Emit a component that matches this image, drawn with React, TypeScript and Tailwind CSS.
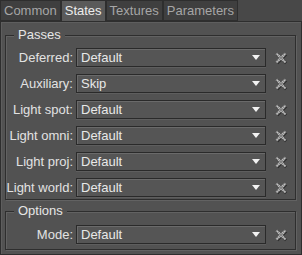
import React from 'react';

const rows: { label: string; value: string }[] = [
  { label: 'Deferred:', value: 'Default' },
  { label: 'Auxiliary:', value: 'Skip' },
  { label: 'Light spot:', value: 'Default' },
  { label: 'Light omni:', value: 'Default' },
  { label: 'Light proj:', value: 'Default' },
  { label: 'Light world:', value: 'Default' },
];

function ClearIcon() {
  return (
    <svg width="14" height="14" viewBox="0 0 14 14" className="shrink-0">
      <path d="M2.5 2.5 L11.5 11.5 M11.5 2.5 L2.5 11.5" stroke="#2c2c2c" strokeWidth="3.2" transform="translate(0.6,0.6)" />
      <path d="M2.5 2.5 L11.5 11.5 M11.5 2.5 L2.5 11.5" stroke="#c8c8c8" strokeWidth="2.4" />
      <path d="M2.5 2.5 L11.5 11.5 M11.5 2.5 L2.5 11.5" stroke="#7a7a7a" strokeWidth="2.4" strokeDasharray="1 1" />
    </svg>
  );
}

function Combo({ value }: { value: string }) {
  return (
    <div className="w-[190px] h-[19px] flex items-center justify-between border border-[#2a2a2a] bg-[#555555] shadow-[inset_1px_1px_0_#6a6a6a,0_1px_0_#5e5e5e] pl-[4px] pr-[5px]">
      <span className="leading-none text-[#e8e8e8]">{value}</span>
      <svg width="8" height="5" viewBox="0 0 8 5">
        <path d="M0 0 H8 L4 5 Z" fill="#f2f2f2" />
      </svg>
    </div>
  );
}

function Row({ label, value }: { label: string; value: string }) {
  return (
    <div className="flex items-center h-[19px]">
      <div className="w-[70px] text-right pr-[3px] text-[#e2e2e2] whitespace-nowrap">{label}</div>
      <Combo value={value} />
      <div className="ml-[8px]">
        <ClearIcon />
      </div>
    </div>
  );
}

function Group({ title, children }: { title: string; children: React.ReactNode }) {
  return (
    <div className="relative border border-[#2e2e2e] shadow-[1px_1px_0_#626262,inset_1px_1px_0_#626262] ml-[4px] mr-[5px]">
      <div className="absolute -top-[10px] left-[8px] px-[4px] bg-[#525252] text-[#e6e6e6] leading-[18px]">
        {title}
      </div>
      {children}
    </div>
  );
}

export default function App() {
  return (
    <div
      className="w-[302px] h-[255px] bg-[#484848] text-[13px] overflow-hidden"
      style={{ fontFamily: '"Liberation Sans", Arial, sans-serif' }}
    >
      {/* tabs */}
      <div className="flex h-[21px] items-end">
        <div className="h-[21px] px-[3px] flex items-center bg-[#3f3f3f] border border-[#2e2e2e] text-[#a6a6a6]">Common</div>
        <div className="h-[21px] px-[3px] flex items-center bg-[#5a5a5a] border-t border-x border-[#2e2e2e] text-[#ececec]">States</div>
        <div className="h-[21px] px-[3px] flex items-center bg-[#3f3f3f] border border-[#2e2e2e] text-[#a6a6a6]">Textures</div>
        <div className="h-[21px] px-[3px] flex items-center bg-[#3f3f3f] border border-[#2e2e2e] text-[#a6a6a6]">Parameters</div>
      </div>
      {/* panel */}
      <div className="h-[234px] w-[302px] bg-[#525252] border border-[#2e2e2e] shadow-[inset_1px_1px_0_#5e5e5e] pt-[13px]">
        <Group title="Passes">
          <div className="flex flex-col gap-[7px] pt-[12px] pb-[2px]">
            {rows.map((r) => (
              <Row key={r.label} label={r.label} value={r.value} />
            ))}
          </div>
        </Group>
        <div className="h-[11px]" />
        <Group title="Options">
          <div className="flex flex-col pt-[13px] pb-[5px]">
            <Row label="Mode:" value="Default" />
          </div>
        </Group>
      </div>
    </div>
  );
}
